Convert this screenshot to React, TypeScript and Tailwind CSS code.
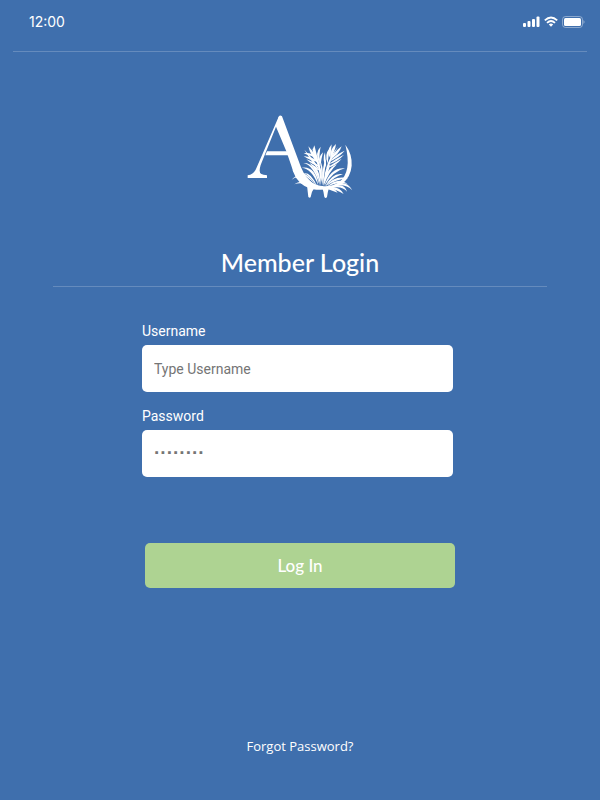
import { useState } from 'react';

// blade: base x/y, bend x/y, tip x/y, half width at the bend
type Blade = [number, number, number, number, number, number, number];

const blades: Blade[] = [
  // left tuft
  [240, 246, 200, 196, 170, 224, 7],
  [244, 244, 205, 190, 178, 208, 5],
  [205, 218, 185, 206, 172, 196, 5],
  [200, 204, 195, 180, 182, 180, 5],
  [225, 242, 200, 225, 178, 238, 5],
  [250, 242, 236, 186, 200, 188, 7],
  [254, 242, 240, 176, 205, 174, 6],
  [246, 244, 226, 206, 206, 204, 5],
  [256, 240, 250, 190, 226, 176, 7],
  [258, 240, 258, 190, 246, 168, 6],
  // middle
  [262, 242, 262, 195, 258, 172, 5],
  [264, 242, 264, 190, 274, 160, 6],
  [264, 242, 276, 196, 286, 176, 6],
  // right tuft
  [266, 242, 276, 196, 306, 178, 7],
  [268, 243, 290, 192, 330, 190, 7],
  [270, 244, 298, 206, 324, 208, 7],
  [272, 244, 300, 216, 340, 220, 7],
  [275, 246, 312, 220, 338, 238, 7],
  [285, 246, 330, 225, 352, 256, 7],
  [290, 248, 325, 235, 336, 260, 7],
  [276, 250, 308, 246, 326, 267, 8],
  [270, 250, 292, 250, 308, 263, 7],
];

const plumes: Blade[] = [
  // left flower
  [262, 235, 254, 170, 230, 128, 6],
  [256, 200, 236, 170, 208, 134, 6],
  [254, 182, 234, 150, 220, 124, 9],
  [250, 170, 234, 140, 238, 121, 9],
  [254, 176, 244, 146, 257, 125, 8],
  [250, 160, 224, 146, 206, 145, 6],
  [252, 170, 228, 162, 206, 153, 7],
  [256, 186, 236, 176, 214, 163, 6],
  [256, 186, 252, 160, 264, 142, 7],
  [258, 198, 240, 190, 224, 174, 6],
  // right flower
  [266, 235, 276, 170, 308, 126, 6],
  [274, 190, 266, 164, 270, 142, 6],
  [278, 176, 274, 150, 284, 130, 7],
  [286, 160, 280, 140, 290, 118, 8],
  [286, 160, 292, 136, 303, 117, 9],
  [284, 164, 306, 144, 320, 124, 8],
  [282, 170, 306, 154, 329, 137, 7],
  [280, 178, 304, 166, 327, 149, 6],
  [276, 188, 298, 180, 320, 161, 6],
];

const bladePath = ([bx, by, cx, cy, tx, ty, w]: Blade) => {
  const dx = tx - bx;
  const dy = ty - by;
  const len = Math.hypot(dx, dy) || 1;
  const nx = (-dy / len) * w;
  const ny = (dx / len) * w;
  return `M${bx} ${by}Q${cx + nx} ${cy + ny} ${tx} ${ty}Q${cx - nx} ${cy - ny} ${bx} ${by}Z`;
};

function Emblem() {
  return (
    <svg viewBox="0 0 390 300" className="w-[130px] h-[100px]" fill="white" role="img" aria-label="Club emblem">
      {/* left leg, foot and bar */}
      <path d="M131 35L140 34L132 65H123L77 180Q70 203 79 207Q84 210 96 211V219H38V211Q54 210 63 192Z" />
      <path d="M96 139H160V151H91Z" />
      {/* right leg sweeping into the bowl */}
      <path d="M131 35Q135 29 141 34L191 168Q204 208 224 227Q240 240 262 243Q290 246 312 232Q352 200 331 119Q352 147 350 182Q347 216 322 236Q290 257 244 254Q204 250 183 218Q174 202 169 182L154 139L123 65Z" />
      {/* roots */}
      <path d="M216 240L238 248Q229 260 227 276Q225 281 220 276Q218 260 216 240Z" />
      <path d="M262 248H282Q278 260 276 276Q272 282 268 276Q266 260 262 248Z" />
      {blades.map((b, i) => (
        <path key={i} d={bladePath(b)} />
      ))}
      {plumes.map((b, i) => (
        <path key={i} d={bladePath(b)} />
      ))}
    </svg>
  );
}

function StatusIcons() {
  return (
    <div className="flex items-center gap-1">
      <svg viewBox="0 0 17 12" className="w-[17px] h-3" fill="white">
        <rect x="0" y="7" width="3" height="4" rx="1" />
        <rect x="4.5" y="5" width="3" height="6" rx="1" />
        <rect x="9" y="3" width="3" height="8" rx="1" />
        <rect x="13.5" y="0.5" width="3" height="10.5" rx="1" />
      </svg>
      <svg viewBox="0 0 14 12" className="w-3.5 h-3" fill="none" stroke="white" strokeWidth="1.8">
        <path d="M0.8 4.4Q7 -1.4 13.2 4.4" />
        <path d="M3 6.8Q7 3.2 11 6.8" />
        <path d="M4.8 8.4Q7 6.6 9.2 8.4L7 10.8Z" fill="white" stroke="none" />
      </svg>
      <svg viewBox="0 0 24 12" className="w-6 h-3">
        <rect x="0.5" y="0.5" width="20" height="11" rx="3" fill="none" stroke="white" strokeOpacity="0.4" />
        <rect x="2" y="2" width="17" height="8" rx="1.5" fill="white" />
        <path d="M21.5 4Q23.5 6 21.5 8Z" fill="white" fillOpacity="0.5" />
      </svg>
    </div>
  );
}

export default function App() {
  const [username, setUsername] = useState('');
  const [password, setPassword] = useState('');

  const inputClass =
    "block w-full h-[47px] px-3 rounded-[5px] bg-white text-sm text-gray-700 placeholder:text-[#757575] outline-none";

  return (
    <div className="min-h-screen flex flex-col bg-[#3f6fad] text-white font-['Roboto','Liberation_Sans',sans-serif]">
      <header className="mx-[13px] h-[52px] pt-3 pl-4 pr-px flex items-start justify-between border-b border-white/20">
        <span className="text-sm leading-5 font-['Inter',sans-serif]">12:00</span>
        <div className="pt-1">
          <StatusIcons />
        </div>
      </header>

      <main className="flex-1 flex flex-col">
        <div className="mt-[53px] flex justify-center">
          <Emblem />
        </div>

        <h1 className="mx-[53px] mt-10 h-[42px] text-center text-[25px] leading-[34px] font-medium border-b border-white/20 font-['Lato',sans-serif]">
          Member Login
        </h1>

        <form
          className="w-full max-w-[316px] mx-auto mt-8 flex flex-col"
          onSubmit={e => e.preventDefault()}
        >
          <div className="mr-[5px]">
            <label htmlFor="username" className="block h-[26px] text-sm leading-6">Username</label>
            <input
              id="username"
              type="text"
              placeholder="Type Username"
              value={username}
              onChange={e => setUsername(e.target.value)}
              className={inputClass}
            />
          </div>
          <div className="mr-[5px] mt-3">
            <label htmlFor="password" className="block h-[26px] text-sm leading-6">Password</label>
            <input
              id="password"
              type="password"
              placeholder="········"
              value={password}
              onChange={e => setPassword(e.target.value)}
              className={`${inputClass} placeholder:text-[19px] placeholder:font-bold placeholder:font-['Liberation_Sans',sans-serif]`}
            />
          </div>
          <button
            type="submit"
            className="mx-[3px] mt-[66px] h-[45px] rounded-[5px] bg-[#aed392] text-[17px] font-medium font-['Lato',sans-serif]"
          >
            Log In
          </button>
        </form>

        <a href="#forgot" className="mt-auto mb-11 self-center text-[13px] leading-5 font-['Open_Sans',sans-serif]">
          Forgot Password?
        </a>
      </main>
    </div>
  );
}
